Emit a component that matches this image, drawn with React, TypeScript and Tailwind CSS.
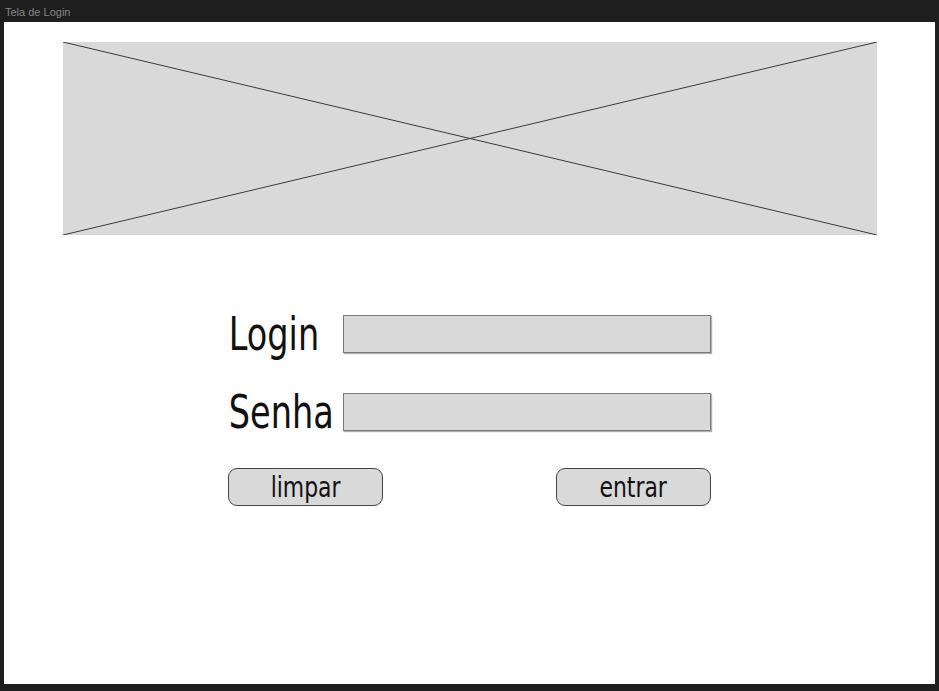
export default function App() {
  return (
    <div className="h-[691px] w-[939px] bg-[#1e1e1e] flex flex-col font-['Liberation_Sans',sans-serif]">
      {/* Title bar */}
      <div className="h-[22px] px-[5px] pt-[7px] text-[11px] leading-none text-[#858585]">Tela de Login</div>

      {/* Canvas */}
      <div className="mx-[4px] h-[662px] bg-white pl-[59px] pr-[58px] pt-[20px]">
        {/* Image placeholder */}
        <div className="h-[193px] bg-[#d9d9d9]">
          <svg className="w-full h-full" viewBox="0 0 814 193" preserveAspectRatio="none">
            <line x1="0" y1="0" x2="814" y2="193" stroke="#3a3a3a" strokeWidth="1" />
            <line x1="0" y1="193" x2="814" y2="0" stroke="#3a3a3a" strokeWidth="1" />
          </svg>
        </div>

        {/* Form */}
        <div className="mt-[80px] ml-[165px] w-[483px] flex flex-col font-['Liberation_Sans_Narrow','DejaVu_Sans_Condensed',sans-serif] text-[#111]">
          <div className="flex items-center h-[38px]">
            <span className="w-[115px] pl-px text-[46px] leading-none scale-x-[0.81] origin-left">Login</span>
            <div className="flex-1 h-[38px] bg-[#d9d9d9] border border-[#7a7a7a] shadow-[1px_1px_1px_rgba(0,0,0,0.3)]" />
          </div>
          <div className="flex items-center h-[38px] mt-[40px]">
            <span className="w-[115px] pl-px text-[46px] leading-none scale-x-[0.81] origin-left">Senha</span>
            <div className="flex-1 h-[38px] bg-[#d9d9d9] border border-[#7a7a7a] shadow-[1px_1px_1px_rgba(0,0,0,0.3)]" />
          </div>
          <div className="flex justify-between mt-[37px]">
            <button className="w-[155px] h-[38px] rounded-[9px] bg-[#d9d9d9] border border-[#444] text-[29px] leading-none">
              <span className="inline-block scale-x-[0.84]">limpar</span>
            </button>
            <button className="w-[155px] h-[38px] rounded-[9px] bg-[#d9d9d9] border border-[#444] text-[29px] leading-none">
              <span className="inline-block scale-x-[0.84]">entrar</span>
            </button>
          </div>
        </div>
      </div>
    </div>
  )
}
